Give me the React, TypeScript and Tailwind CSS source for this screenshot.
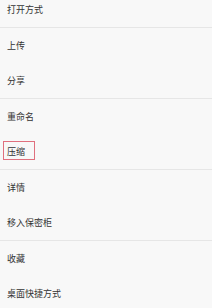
import React from "react";

const groups: string[][] = [
  ["打开方式"],
  ["上传", "分享"],
  ["重命名", "压缩"],
  ["详情", "移入保密柜"],
  ["收藏", "桌面快捷方式"],
];

export default function App() {
  return (
    <div
      className="w-[212px] h-[308px] overflow-hidden bg-[#f8f8f8] text-[#333333]"
      style={{ fontFamily: '"Noto Sans CJK SC", "Noto Sans", sans-serif' }}
    >
      <div className="-mt-[8px] flex flex-col">
        {groups.map((g, gi) => (
          <div
            key={gi}
            className={gi > 0 ? "border-t border-[#e6e6e6] flex flex-col" : "flex flex-col"}
          >
            {g.map((label) => (
              <div key={label} className="h-[35px] flex items-center pl-[7px]">
                {label === "压缩" ? (
                  <span className="relative text-[9px] leading-none">
                    {label}
                    <span className="absolute left-[-4px] top-[-6px] w-[32px] h-[19px] border border-[#e0707e]" />
                  </span>
                ) : (
                  <span className="text-[9px] leading-none">{label}</span>
                )}
              </div>
            ))}
          </div>
        ))}
      </div>
    </div>
  );
}
